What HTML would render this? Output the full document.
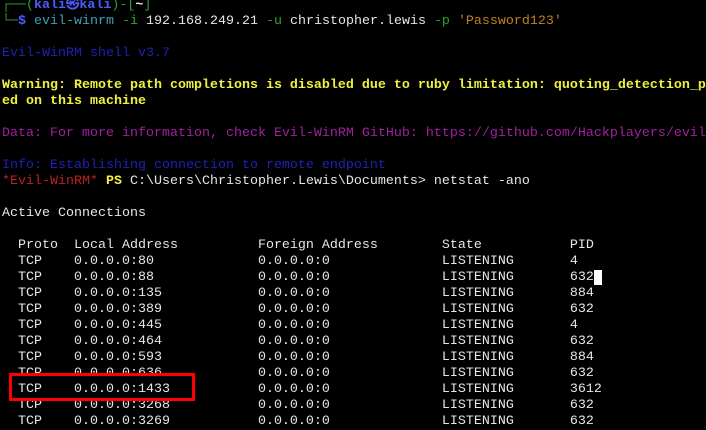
<!DOCTYPE html>
<html><head><meta charset="utf-8"><style>
html,body{margin:0;padding:0;background:#000;width:706px;height:430px;overflow:hidden}
pre{position:absolute;left:2px;top:-2px;margin:0;font-family:"Liberation Mono","DejaVu Sans Mono",monospace;font-size:13.33px;line-height:16px;color:#e6e6e6;white-space:pre}
.g{color:#2aa52a}.b{color:#4b5cff;font-weight:bold}.c{color:#3aa3b5}.w{color:#e6e6e6}.o{color:#c08020}
.db{color:#2020b8}.y{color:#f0f040;font-weight:bold}.m{color:#a020a0}.r{color:#c02020}.yp{color:#f0f040;font-weight:bold}
.cur{background:#fff;color:#fff}
.box{position:absolute;left:9px;top:373px;width:180px;height:22px;border:3px solid #ff0000}
</style></head><body>
<pre><span class="g">┌──(</span><span class="b">kali㉿kali</span><span class="g">)-[</span><span class="w" style="font-weight:bold">~</span><span class="g">]</span>
<span class="g">└─</span><span class="b">$</span> <span class="c">evil-winrm</span> <span class="g">-i</span> 192.168.249.21 <span class="g">-u</span> christopher.lewis <span class="g">-p</span> <span class="o">'Password123'</span>

<span class="db">Evil-WinRM shell v3.7</span>

<span class="y">Warning: Remote path completions is disabled due to ruby limitation: quoting_detection_p</span>
<span class="y">ed on this machine</span>

<span class="m">Data: For more information, check Evil-WinRM GitHub: https://github.com/Hackplayers/evil</span>

<span class="db">Info: Establishing connection to remote endpoint</span>
<span class="r">*Evil-WinRM*</span> <span class="yp">PS</span> C:\Users\Christopher.Lewis\Documents&gt; netstat -ano

Active Connections

  Proto  Local Address          Foreign Address        State           PID
  TCP    0.0.0.0:80             0.0.0.0:0              LISTENING       4
  TCP    0.0.0.0:88             0.0.0.0:0              LISTENING       632<span class="cur"> </span>
  TCP    0.0.0.0:135            0.0.0.0:0              LISTENING       884
  TCP    0.0.0.0:389            0.0.0.0:0              LISTENING       632
  TCP    0.0.0.0:445            0.0.0.0:0              LISTENING       4
  TCP    0.0.0.0:464            0.0.0.0:0              LISTENING       632
  TCP    0.0.0.0:593            0.0.0.0:0              LISTENING       884
  TCP    0.0.0.0:636            0.0.0.0:0              LISTENING       632
  TCP    0.0.0.0:1433           0.0.0.0:0              LISTENING       3612
  TCP    0.0.0.0:3268           0.0.0.0:0              LISTENING       632
  TCP    0.0.0.0:3269           0.0.0.0:0              LISTENING       632</pre>
<div class="box"></div>
</body></html>
